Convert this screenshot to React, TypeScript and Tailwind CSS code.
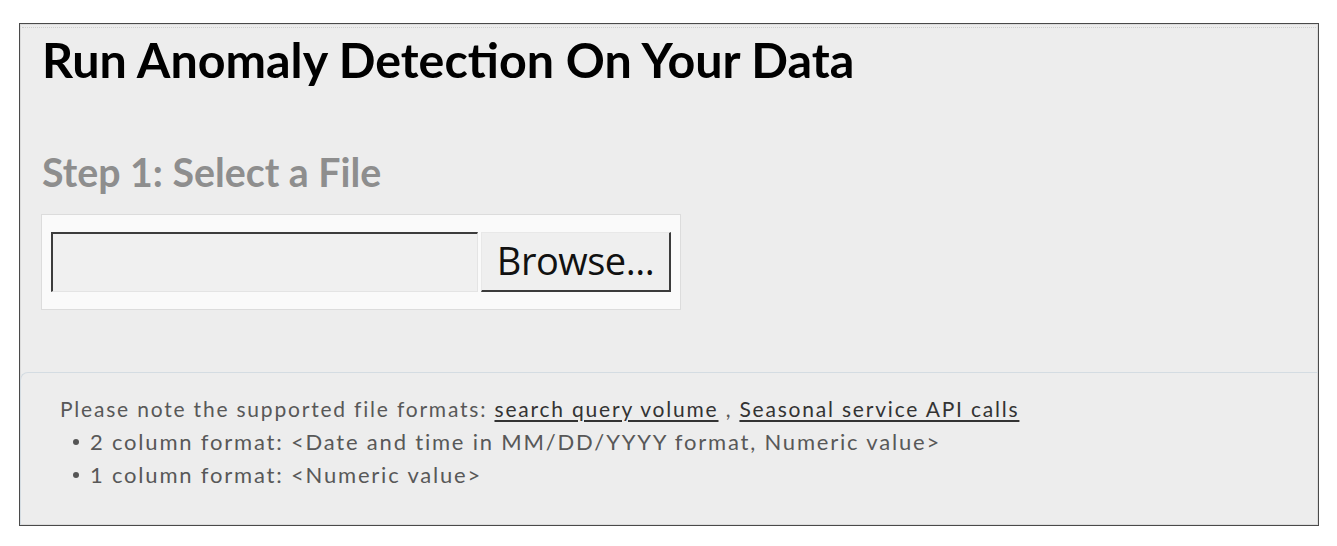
import React from 'react'

const lato = { fontFamily: 'Lato, "Open Sans", sans-serif' }

export default function App() {
  return (
    <div className="min-h-screen bg-white pt-[23px] pl-[19px] pr-[19px]" style={lato}>
      <div className="flex h-[503px] w-[1300px] flex-col border border-[#4a4a4a] bg-[#ededed] shadow-[inset_0_0_0_1px_#dcdcdc]">
        {/* dotted rule along the top */}
        <div className="mx-[2px] mt-[3px] border-t border-dotted border-[#cfcfcf]" />

        <div className="px-[22px]">
          <h1 className="mt-[3px] text-[48.4px] font-bold leading-[56px] text-black">
            Run Anomaly Detection On Your Data
          </h1>
          <h2 className="mt-[62px] text-[39.3px] font-bold leading-[46px] text-[#8e8e8e]">
            Step 1: Select a File
          </h2>

          {/* file picker */}
          <div className="mt-[19px] -ml-[1px] flex w-[640px] items-center border border-[#dcdcdc] bg-[#fafafa] px-[9px] py-[17px]">
            <div className="h-[60px] w-[427px] border-t-2 border-l-2 border-[#3c3c3c] border-b border-r border-b-[#e4e4e4] border-r-[#e4e4e4] bg-[#f0f0f0]" />
            <button
              type="button"
              className="ml-[3px] flex h-[60px] w-[190px] items-center justify-center border-t border-l border-t-[#e8e8e8] border-l-[#e8e8e8] border-b-2 border-r-2 border-b-[#3c3c3c] border-r-[#3c3c3c] bg-[#efefef] pb-[2px] text-[38px] tracking-[-0.5px] text-[#111]"
              style={{ fontFamily: '"Open Sans", "Noto Sans", sans-serif' }}
            >
              Browse...
            </button>
          </div>
        </div>

        {/* notes */}
        <div className="mt-auto h-[153px] rounded-tl-[8px] border-t border-l border-[#d4dce2] px-[39px] pt-[19px] text-[21px] leading-[33px] tracking-[1.8px] text-[#585858]">
          <p>
            Please note the supported file formats:{'  '}
            <a href="#" className="text-[#333] underline underline-offset-[3px]">search query volume</a>
            {' , '}
            <a href="#" className="text-[#333] underline underline-offset-[3px]">Seasonal service API calls</a>
          </p>
          <ul className="pl-[13px] text-[22px]">
            <li className="flex items-center">
              <span className="mr-[11px] h-[6px] w-[6px] shrink-0 rounded-full bg-[#555]" />
              <span>2 column format: &lt;Date and time in MM/DD/YYYY format, Numeric value&gt;</span>
            </li>
            <li className="flex items-center">
              <span className="mr-[11px] h-[6px] w-[6px] shrink-0 rounded-full bg-[#555]" />
              <span>1 column format: &lt;Numeric value&gt;</span>
            </li>
          </ul>
        </div>
      </div>
    </div>
  )
}
